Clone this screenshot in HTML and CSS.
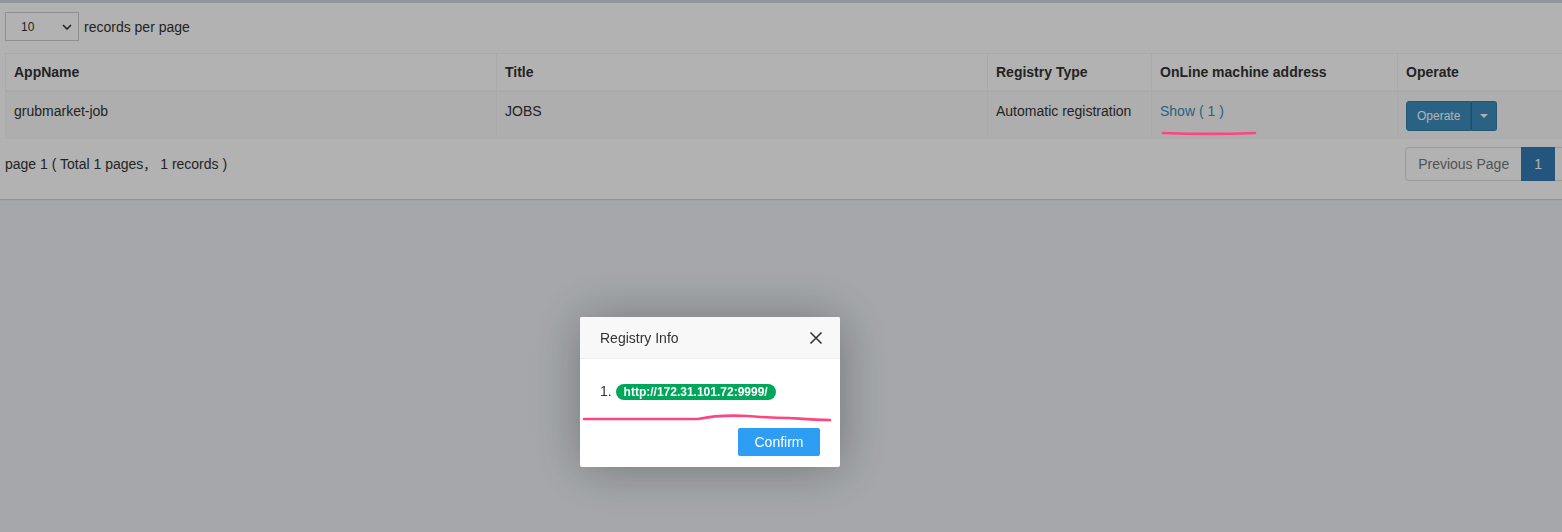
FILE: index.html
```html
<!DOCTYPE html>
<html>
<head>
<meta charset="utf-8">
<title>Registry</title>
<link rel="stylesheet" href="styles.css">
</head>
<body>
<div class="page">
  <div class="box">
    <div class="toolbar">
      <div class="select"><span>10</span>
        <svg width="10" height="6" viewBox="0 0 10 6"><path d="M1 1l4 4 4-4" fill="none" stroke="#333" stroke-width="1.6"/></svg>
      </div>
      <span class="label">records per page</span>
    </div>
    <table class="grid">
      <colgroup>
        <col class="c1"><col class="c2"><col class="c3"><col class="c4"><col class="c5">
      </colgroup>
      <thead>
        <tr><th>AppName</th><th>Title</th><th>Registry Type</th><th>OnLine machine address</th><th>Operate</th></tr>
      </thead>
      <tbody>
        <tr>
          <td>grubmarket-job</td>
          <td>JOBS</td>
          <td>Automatic registration</td>
          <td><a class="show">Show ( 1 )</a></td>
          <td>
            <div class="btn-group">
              <span class="btn">Operate</span><span class="btn caret-btn"><span class="caret"></span></span>
            </div>
          </td>
        </tr>
      </tbody>
    </table>
    <div class="footer">
      <div class="info">page 1 ( Total 1 pages<span class="cjk">，</span> 1 records )</div>
      <ul class="pagination">
        <li class="disabled first"><span>Previous Page</span></li>
        <li class="active"><span>1</span></li>
        <li class="disabled last"><span></span></li>
      </ul>
    </div>
  </div>
</div>
<div class="shade"></div>
<div class="modal">
  <div class="modal-title">Registry Info
    <svg class="close" width="14" height="14" viewBox="0 0 14 14"><path d="M1.5 1.5l11 11M12.5 1.5l-11 11" stroke="#333" stroke-width="1.6" fill="none"/></svg>
  </div>
  <div class="modal-body">1. <span class="badge">http://172.31.101.72:9999/</span></div>
  <div class="modal-btns"><span class="confirm">Confirm</span></div>
</div>
<svg class="marks" width="1562" height="532" viewBox="0 0 1562 532">
  <path d="M1163 133 C1190 134 1230 134 1255 133" stroke="#fd4681" stroke-width="2.6" fill="none" stroke-linecap="round"/>
  <path d="M584 419 L698 419 C712 416 730 415 748 416 C760 417 770 418 790 418 C805 419 818 420 830 420" stroke="#fd4681" stroke-width="2.6" fill="none" stroke-linecap="round"/>
</svg>
</body>
</html>
```
FILE: styles.css
```css
html, body {
  margin: 0;
  padding: 0;
  overflow: hidden;
  width: 1562px;
  height: 532px;
  background: #ecf0f5;
  font-family: "Liberation Sans", Arial, "Noto Sans CJK SC", sans-serif;
  font-size: 14px;
  color: #333;
}
.page {
  width: 1651px;
}
.box {
  background: #fff;
  border-top: 3px solid #d2d6de;
  box-shadow: 0 1px 1px rgba(0,0,0,0.12);
  padding: 9px 5px 17px 5px;
  height: 170px;
}
.toolbar {
  display: flex;
  align-items: center;
  gap: 5px;
  height: 29px;
}
.select {
  box-sizing: border-box;
  width: 74px;
  height: 29px;
  border: 1px solid #ccc;
  display: flex;
  align-items: center;
  justify-content: space-between;
  padding: 0 6px 0 15px;
  font-size: 12px;
  color: #333;
}
.label {
  font-size: 14px;
}
.grid {
  margin-top: 12px;
  border-collapse: collapse;
  table-layout: fixed;
  width: 1631px;
  border: 1px solid #f4f4f4;
}
.c1 { width: 491px; }
.c2 { width: 491px; }
.c3 { width: 164px; }
.c4 { width: 246px; }
.c5 { width: 239px; }
.grid th, .grid td {
  border: 1px solid #f4f4f4;
  padding: 8px;
  line-height: 20px;
  text-align: left;
  vertical-align: top;
}
.grid th {
  font-weight: bold;
  border-bottom: 2px solid #f4f4f4;
}
.grid tbody tr {
  background: #f9f9f9;
}
.grid td {
  height: 30px;
  padding-top: 9px;
  padding-bottom: 7px;
}
.show {
  color: #3c8dbc;
  text-decoration: none;
}
.btn-group {
  display: inline-flex;
}
.btn {
  display: inline-block;
  background: #3c8dbc;
  border: 1px solid #367fa9;
  color: #fff;
  font-size: 12px;
  line-height: 18px;
  padding: 5px 10px;
  border-radius: 3px 0 0 3px;
}
.caret-btn {
  border-left-color: #2f6f94;
  border-radius: 0 3px 3px 0;
  padding: 5px 8px;
  display: inline-flex;
  align-items: center;
}
.caret {
  width: 0;
  height: 0;
  border-left: 4px solid transparent;
  border-right: 4px solid transparent;
  border-top: 4px solid #fff;
}
.footer {
  display: flex;
  justify-content: space-between;
  align-items: center;
  margin-top: 8px;
}
.info {
  font-size: 14px;
  margin-top: -1px;
}
.cjk {
  font-family: "Noto Sans CJK SC", sans-serif;
  font-size: 13px;
}
.pagination {
  display: flex;
  list-style: none;
  margin: 0;
  padding: 0;
}
.pagination li span {
  display: block;
  padding: 6px 12px;
  line-height: 20px;
  min-height: 20px;
  border: 1px solid #ddd;
  margin-left: -1px;
  background: #fff;
}
.pagination .disabled span {
  color: #777;
}
.pagination .first span {
  border-radius: 4px 0 0 4px;
  margin-left: 0;
}
.pagination .last span {
  border-radius: 0 4px 4px 0;
  width: 66px;
}
.pagination .active span {
  background: #337ab7;
  border-color: #337ab7;
  color: #fff;
  position: relative;
}
.shade {
  position: fixed;
  inset: 0;
  background: rgba(0,0,0,0.3);
}
.modal {
  position: fixed;
  left: 580px;
  top: 317px;
  width: 260px;
  height: 150px;
  background: #fff;
  border-radius: 2px;
  box-shadow: 1px 1px 50px rgba(0,0,0,0.3);
}
.modal-title {
  height: 41px;
  line-height: 42px;
  padding: 0 80px 0 20px;
  background: #f8f8f8;
  border-bottom: 1px solid #eee;
  border-radius: 2px 2px 0 0;
  font-size: 14px;
  color: #333;
  position: relative;
}
.close {
  position: absolute;
  right: 17px;
  top: 14px;
}
.modal-body {
  padding: 22px 20px 0 20px;
  height: 42px;
  line-height: 20px;
  font-size: 14px;
  color: #333;
}
.badge {
  display: inline-block;
  background: #00a65a;
  color: #fff;
  font-size: 12px;
  font-weight: bold;
  line-height: 12px;
  padding: 2px 8px;
  border-radius: 10px;
}
.modal-btns {
  display: flex;
  justify-content: flex-end;
  padding: 0 20px;
  margin-top: 5px;
}
.confirm {
  display: inline-block;
  height: 28px;
  line-height: 28px;
  padding: 0 16.5px;
  background: #2e9ef4;
  color: #fff;
  font-size: 14px;
  border-radius: 2px;
}
.marks {
  position: fixed;
  left: 0;
  top: 0;
  pointer-events: none;
}
```
